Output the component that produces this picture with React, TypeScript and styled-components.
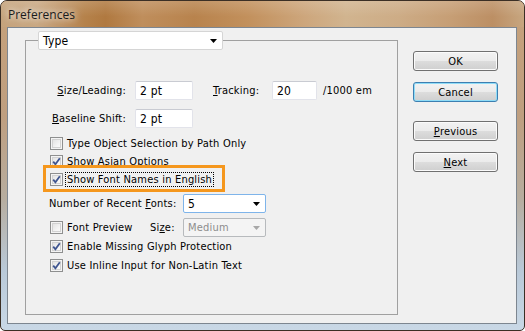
import React from "react";
import styled, { createGlobalStyle, css } from "styled-components";

const GlobalStyle = createGlobalStyle`
  html, body {
    margin: 0;
    padding: 0;
    background: #ffffff;
  }
  body {
    width: 525px;
    height: 331px;
    overflow: hidden;
    font-family: "DejaVu Sans Condensed", "DejaVu Sans", sans-serif;
    font-size: 11px;
    letter-spacing: 0.2px;
    color: #000;
  }
`;

const Window = styled.div`
  box-sizing: border-box;
  width: 525px;
  height: 331px;
  display: flex;
  flex-direction: column;
  border: 1px solid #3b2f25;
  border-radius: 7px 7px 5px 5px;
  overflow: hidden;
  padding: 0 7px 6px 6px;
  background: linear-gradient(
    180deg,
    #c6a17a 0%,
    #bf9f80 35%,
    #b7ad9f 60%,
    #b9c9d8 82%,
    #c9d8e6 100%
  );
`;

const TitleBar = styled.div`
  height: 26px;
  margin: 0 -7px 0 -6px;
  padding-left: 7px;
  display: flex;
  align-items: center;
  background:
    linear-gradient(180deg, rgba(255, 255, 255, 0.15) 0%, rgba(255, 255, 255, 0) 60%),
    linear-gradient(
      90deg,
      #c5a37c 0%,
      #c9a883 7%,
      #b5824b 16%,
      #b07940 20%,
      #bf8e5c 27%,
      #b8834d 37%,
      #c2905c 47%,
      #cda67c 58%,
      #d1b48f 66%,
      #cdac86 76%,
      #c69e75 86%,
      #bc8f64 94%,
      #c7a680 100%
    );
`;

const Title = styled.span`
  font-family: "Open Sans", "Noto Sans", sans-serif;
  font-size: 12px;
  letter-spacing: 0;
  color: #1a1a1a;
  text-shadow: 0 0 6px rgba(255, 255, 255, 0.9), 0 0 10px rgba(255, 255, 255, 0.6);
`;

const Client = styled.div`
  flex: 1;
  display: flex;
  align-items: flex-start;
  gap: 15px;
  border: 1px solid #7d8690;
  background: #f0f0f0;
  padding: 3px 17px 0 17px;
`;

const Group = styled.fieldset`
  box-sizing: border-box;
  width: 373px;
  height: 284px;
  margin: 0;
  padding: 0;
  border: 1px solid #a0a0a0;
  min-inline-size: 0;
`;

const GroupLegend = styled.legend`
  padding: 0;
  margin-left: 12px;
`;

const Combo = styled.div<{ $width: number; $focused?: boolean; $disabled?: boolean }>`
  box-sizing: border-box;
  height: 19px;
  display: flex;
  align-items: center;
  justify-content: space-between;
  border-radius: 2px;
  padding: 0 5px 0 4px;
  width: ${({ $width }) => $width}px;
  background: ${({ $disabled }) => ($disabled ? "#f4f4f4" : "#ffffff")};
  border: 1px solid
    ${({ $focused, $disabled }) => ($disabled ? "#b7babd" : $focused ? "#7eb4ea" : "#d5d5d5")};
  color: ${({ $disabled }) => ($disabled ? "#8d8d8d" : "#000")};
  font-size: ${({ $disabled }) => ($disabled ? "11px" : "12px")};
`;

const ComboArrow = ({ color = "#000" }: { color?: string }) => (
  <svg width="7" height="4" viewBox="0 0 7 4">
    <polygon points="0,0 7,0 3.5,4" fill={color} />
  </svg>
);

const Body = styled.div`
  display: flex;
  flex-direction: column;
  padding: 31px 0 0 0;
`;

const FieldRow = styled.div<{ $top?: number; $indent?: number }>`
  display: flex;
  align-items: center;
  height: 19px;
  margin-top: ${({ $top }) => $top ?? 0}px;
  padding-left: ${({ $indent }) => $indent ?? 0}px;
`;

const FieldLabel = styled.span<{ $width: number; $gap?: number; $lead?: number; $right?: boolean }>`
  display: inline-block;
  width: ${({ $width }) => $width}px;
  margin-left: ${({ $lead }) => $lead ?? 0}px;
  margin-right: ${({ $gap }) => $gap ?? 0}px;
  text-align: ${({ $right }) => ($right ? "right" : "left")};
  white-space: nowrap;
`;

const TextBox = styled.div<{ $width: number }>`
  box-sizing: border-box;
  width: ${({ $width }) => $width}px;
  height: 19px;
  display: flex;
  align-items: center;
  padding-left: 4px;
  background: #fff;
  border: 1px solid #e2e3ea;
  border-top-color: #c9cbd2;
  border-radius: 2px;
  font-size: 12px;
`;

const Unit = styled.span`
  margin-left: 6px;
`;

const CheckRow = styled.div<{ $top?: number; $highlight?: boolean }>`
  position: relative;
  display: flex;
  align-items: center;
  height: 18px;
  padding-left: 24px;
  margin-top: ${({ $top }) => $top ?? 0}px;

  ${({ $highlight }) =>
    $highlight &&
    css`
      &::after {
        content: "";
        position: absolute;
        left: 17px;
        top: -5px;
        width: 182px;
        height: 27px;
        box-sizing: border-box;
        border: 3px solid #f5971d;
        pointer-events: none;
      }
    `}
`;

const CheckItem = styled.div<{ $width?: number }>`
  display: flex;
  align-items: center;
  gap: 3px;
  width: ${({ $width }) => ($width ? `${$width}px` : "auto")};
`;

const Box = styled.span`
  box-sizing: border-box;
  width: 13px;
  height: 13px;
  border: 1px solid #8e8f8f;
  background: linear-gradient(135deg, #dcdcdc 0%, #f4f4f4 60%, #ffffff 100%);
  box-shadow: inset 0 0 0 1px #f4f4f4, inset 0 0 0 2px #d2d2d2;
  display: inline-flex;
  align-items: center;
  justify-content: center;
  flex: none;
`;

const CheckLabel = styled.span<{ $focus?: boolean }>`
  white-space: nowrap;
  padding: 0 1px;
  border: 1px solid transparent;
  margin-left: -1px;
  ${({ $focus }) =>
    $focus &&
    css`
      border: 1px dotted #000;
      line-height: 13px;
    `}
`;

const Check = ({ checked }: { checked?: boolean }) => (
  <Box>
    {checked && (
      <svg width="9" height="9" viewBox="0 0 9 9">
        <path d="M1.2 4.6 L3.4 7.2 L7.8 1.2" fill="none" stroke="#3f5590" strokeWidth="1.8" />
      </svg>
    )}
  </Box>
);

const ButtonColumn = styled.div`
  display: flex;
  flex-direction: column;
  padding-top: 20px;
`;

const Button = styled.div<{ $focused?: boolean; $top?: number }>`
  box-sizing: border-box;
  width: 85px;
  height: 20px;
  margin-top: ${({ $top }) => $top ?? 0}px;
  display: flex;
  align-items: center;
  justify-content: center;
  border-radius: 3px;
  border: 1px solid ${({ $focused }) => ($focused ? "#3c7fb1" : "#707070")};
  box-shadow: inset 0 0 0 1px ${({ $focused }) => ($focused ? "#8fdcf7" : "#fbfbfb")};
  background: linear-gradient(180deg, #f2f2f2 0%, #ebebeb 50%, #dddddd 50%, #cfcfcf 100%);
`;

export default function App() {
  return (
    <>
      <GlobalStyle />
      <Window>
        <TitleBar>
          <Title>Preferences</Title>
        </TitleBar>
        <Client>
          <Group>
            <GroupLegend>
              <Combo $width={185}>
                <span>Type</span>
                <ComboArrow />
              </Combo>
            </GroupLegend>
            <Body>
              <FieldRow>
                <FieldLabel $width={100} $gap={9} $right>
                  <u>S</u>ize/Leading:
                </FieldLabel>
                <TextBox $width={58}>2 pt</TextBox>
                <FieldLabel $width={59} $lead={20}>
                  <u>T</u>racking:
                </FieldLabel>
                <TextBox $width={45}>20</TextBox>
                <Unit>/1000 em</Unit>
              </FieldRow>
              <FieldRow $top={9}>
                <FieldLabel $width={100} $gap={9} $right>
                  <u>B</u>aseline Shift:
                </FieldLabel>
                <TextBox $width={58}>2 pt</TextBox>
              </FieldRow>

              <CheckRow $top={6}>
                <CheckItem>
                  <Check />
                  <CheckLabel>Type Object Selection by Path Only</CheckLabel>
                </CheckItem>
              </CheckRow>
              <CheckRow>
                <CheckItem>
                  <Check checked />
                  <CheckLabel>Show Asian Options</CheckLabel>
                </CheckItem>
              </CheckRow>
              <CheckRow $highlight>
                <CheckItem>
                  <Check checked />
                  <CheckLabel $focus>Show Font Names in English</CheckLabel>
                </CheckItem>
              </CheckRow>

              <FieldRow $top={6} $indent={23}>
                <FieldLabel $width={134}>
                  Number of Recent <u>F</u>onts:
                </FieldLabel>
                <Combo $width={83} $focused>
                  <span>5</span>
                  <ComboArrow />
                </Combo>
              </FieldRow>

              <FieldRow $top={5} $indent={24}>
                <CheckItem $width={100}>
                  <Check />
                  <CheckLabel>Font Preview</CheckLabel>
                </CheckItem>
                <FieldLabel $width={33}>
                  Si<u>z</u>e:
                </FieldLabel>
                <Combo $width={83} $disabled>
                  <span>Medium</span>
                  <ComboArrow color="#a8a8a8" />
                </Combo>
              </FieldRow>

              <CheckRow>
                <CheckItem>
                  <Check checked />
                  <CheckLabel>Enable Missing Glyph Protection</CheckLabel>
                </CheckItem>
              </CheckRow>
              <CheckRow $top={1}>
                <CheckItem>
                  <Check checked />
                  <CheckLabel>Use Inline Input for Non-Latin Text</CheckLabel>
                </CheckItem>
              </CheckRow>
            </Body>
          </Group>

          <ButtonColumn>
            <Button>OK</Button>
            <Button $focused $top={11}>
              Cancel
            </Button>
            <Button $top={19}>
              <u>P</u>revious
            </Button>
            <Button $top={11}>
              <u>N</u>ext
            </Button>
          </ButtonColumn>
        </Client>
      </Window>
    </>
  );
}
